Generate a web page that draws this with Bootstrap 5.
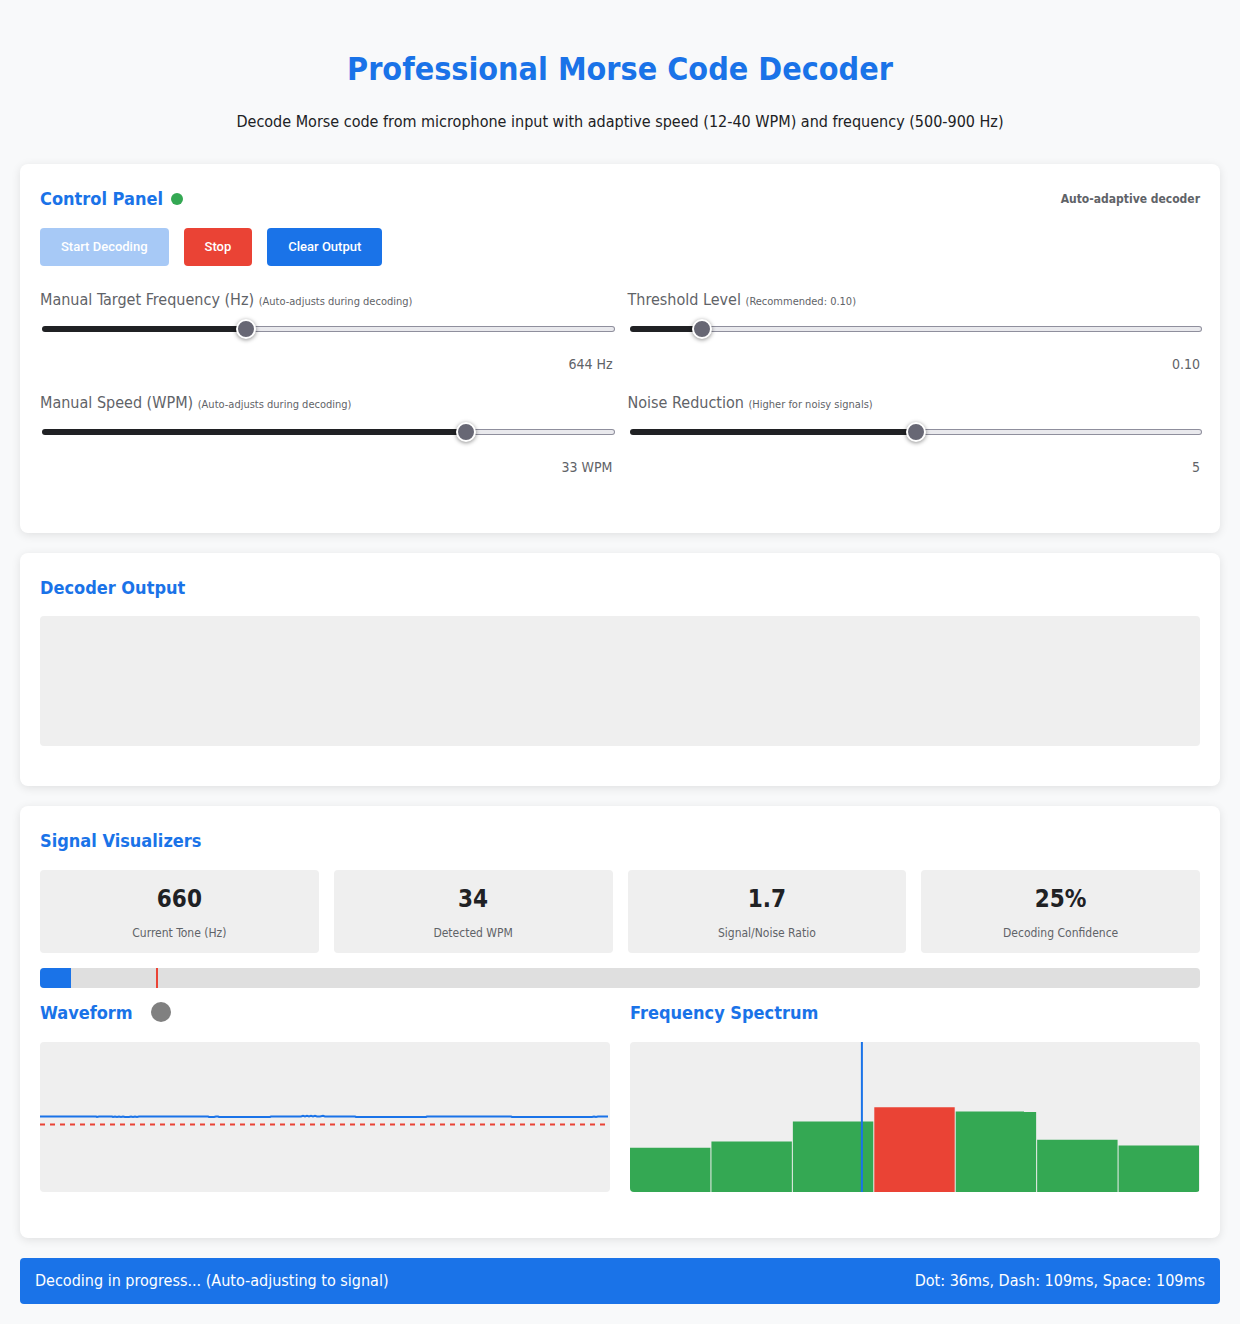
<!DOCTYPE html>
<html lang="en">
<head>
<meta charset="utf-8">
<meta name="viewport" content="width=device-width, initial-scale=1">
<title>Professional Morse Code Decoder</title>
<link href="https://cdn.jsdelivr.net/npm/bootstrap@5.3.0/dist/css/bootstrap.min.css" rel="stylesheet">
<style>
:root { --brand: #1a73e8; --stop: #ea4335; --ok: #34a853; --ink: #202124; --soft: #5f6368; --tile: #efefef; }
body { font-family: "DejaVu Sans Condensed", "DejaVu Sans", sans-serif; font-size: 16px; line-height: 26px; color: var(--ink); background: #f8f9fa; padding: 20px; }
h1, h2 { color: var(--brand); font-weight: 700; }
h1 { font-size: 32px; line-height: 52px; margin: 0 0 14px; }
h2 { font-size: 18px; line-height: 30px; margin: 0 0 14px; }
.intro { padding: 23px 0 29px; }
.panel { background: #fff; border-radius: 8px; box-shadow: 0 2px 10px rgba(0,0,0,.1); padding: 20px; margin-bottom: 20px; }
.gap-15 { gap: 15px; }
.gap-20 { gap: 20px; }
.dot { width: 12px; height: 12px; background: var(--ok); }
.tagline { font-size: 12px; line-height: 30px; font-weight: 700; color: var(--soft); }
.btn { font: 500 13px/18px Roboto, sans-serif; padding: 10px 21px; border: 0; border-radius: 4px; color: #fff; }
.btn:disabled { color: #fff; background: var(--brand); opacity: .38; }
.btn-run, .btn-run:hover { background: var(--brand); color: #fff; }
.btn-halt, .btn-halt:hover { background: var(--stop); color: #fff; }
.settings { display: grid; grid-template-columns: 1fr 1fr; gap: 15px; padding: 21px 0 35px; }
.settings label, .settings output { color: var(--soft); display: block; }
.settings label span { font-size: 11px; }
.settings output { font-size: 14px; line-height: 22px; text-align: right; }
.slider { -webkit-appearance: none; appearance: none; display: block; width: 100%; height: 20px; margin: 4px 0 14px 2px; background: transparent; }
.slider::-webkit-slider-runnable-track { height: 6px; border-radius: 3px; border: 1px solid transparent;
  background: linear-gradient(var(--ink), var(--ink)) 0 0 / var(--at) 100% no-repeat border-box, linear-gradient(#e9e9ed, #e9e9ed) padding-box, linear-gradient(#8f8f9d, #8f8f9d) border-box; }
.slider::-webkit-slider-thumb { -webkit-appearance: none; width: 20px; height: 20px; margin-top: -8px; border-radius: 50%; border: 2px solid #fff; background: #676774; box-shadow: 0 1px 4px rgba(0,0,0,.45); }
.output-title { margin-bottom: 13px; }
.readout { background: var(--tile); border-radius: 4px; height: 130px; margin-bottom: 20px; }
.stat { flex: 1 1 0; background: var(--tile); border-radius: 4px; text-align: center; padding: 10px; }
.stat strong { display: block; font-size: 24px; line-height: 39px; margin-bottom: 5px; }
.stat span { display: block; font-size: 12px; line-height: 19px; color: var(--soft); }
.meter { height: 20px; border-radius: 4px; background: #dfdfdf; overflow: hidden; position: relative; margin: 15px 0 10px; }
.meter-fill { height: 100%; background: var(--brand); }
.meter-mark { position: absolute; top: 0; width: 2px; height: 100%; background: var(--stop); }
.plots { padding-bottom: 26px; }
.plots > div { flex: 1 1 0; min-width: 0; }
.lamp { width: 20px; height: 20px; background: #808080; margin-left: 18px; }
.plot { display: block; width: 100%; height: 150px; border-radius: 4px; background: var(--tile); }
.status { background: var(--brand); color: #fff; border-radius: 4px; padding: 10px 15px; }
</style>
<script src="https://cdn.jsdelivr.net/npm/bootstrap@5.3.0/dist/js/bootstrap.bundle.min.js"></script>
</head>
<body>
<header class="text-center intro">
  <h1>Professional Morse Code Decoder</h1>
  <p class="m-0">Decode Morse code from microphone input with adaptive speed (12-40 WPM) and frequency (500-900 Hz)</p>
</header>
<main>
  <section class="panel">
    <div class="d-flex justify-content-between">
      <h2 class="d-flex align-items-center gap-2">Control Panel <span class="dot rounded-circle"></span></h2>
      <span class="tagline">Auto-adaptive decoder</span>
    </div>
    <div class="d-flex flex-wrap gap-15">
      <button class="btn btn-run" type="button" disabled>Start Decoding</button>
      <button class="btn btn-halt" type="button">Stop</button>
      <button class="btn btn-run" type="button">Clear Output</button>
    </div>
    <div class="settings">
      <div>
        <label for="freq">Manual Target Frequency (Hz) <span>(Auto-adjusts during decoding)</span></label>
        <input class="slider" id="freq" type="range" min="500" max="900" step="10" value="640" style="--at: 35%">
        <output for="freq">644 Hz</output>
      </div>
      <div>
        <label for="threshold">Threshold Level <span>(Recommended: 0.10)</span></label>
        <input class="slider" id="threshold" type="range" min="0.05" max="0.5" step="0.01" value="0.1" style="--at: 11%">
        <output for="threshold">0.10</output>
      </div>
      <div>
        <label for="speed">Manual Speed (WPM) <span>(Auto-adjusts during decoding)</span></label>
        <input class="slider" id="speed" type="range" min="12" max="40" value="33" style="--at: 75%">
        <output for="speed">33 WPM</output>
      </div>
      <div>
        <label for="noise">Noise Reduction <span>(Higher for noisy signals)</span></label>
        <input class="slider" id="noise" type="range" min="0" max="10" value="5" style="--at: 50%">
        <output for="noise">5</output>
      </div>
    </div>
  </section>

  <section class="panel">
    <h2 class="output-title">Decoder Output</h2>
    <div class="readout"></div>
  </section>

  <section class="panel">
    <h2>Signal Visualizers</h2>
    <div class="d-flex gap-15">
      <div class="stat"><strong>660</strong><span>Current Tone (Hz)</span></div>
      <div class="stat"><strong>34</strong><span>Detected WPM</span></div>
      <div class="stat"><strong>1.7</strong><span>Signal/Noise Ratio</span></div>
      <div class="stat"><strong>25%</strong><span>Decoding Confidence</span></div>
    </div>
    <div class="meter">
      <div class="meter-fill" style="width: 2.7%"></div>
      <div class="meter-mark" style="left: 10%"></div>
    </div>
    <div class="d-flex gap-20 plots">
      <div>
        <h2 class="d-flex">Waveform <span class="lamp rounded-circle mt-1"></span></h2>
        <svg class="plot" viewBox="0 0 570 150" preserveAspectRatio="none" aria-hidden="true">
          <path fill="none" stroke="#1a73e8" stroke-width="2" d="M0 74.500H56L57 75L59 74.500H72L73 75L75 74.500L77 75L79 74.500L81 75L83 74.500L85 75H89L91 74.500L93 75L95 74.500L97 75L99 74.500H168L169 75H174L176 74.500H178L179 75H230L231 74.500H261L263 73.800L265 74.500L267 73.800L269 74.500L271 73.800L273 74.500L275 73.800L277 74.500H280L283 73.800L285 74.500H315L316 75H386L387 74.500H471L472 75H552L554 74.500L556 75L558 74.500H568"/>
          <path stroke="#ea4335" stroke-width="2" stroke-dasharray="5 5" d="M0 82.500H570"/>
        </svg>
      </div>
      <div>
        <h2>Frequency Spectrum</h2>
        <svg class="plot" viewBox="0 0 570 150" preserveAspectRatio="none" aria-hidden="true">
          <g fill="#34a853">
            <path d="M0 105.800H80.430V150H0Z"/>
            <path d="M81.430 99.400H161.860V150H81.430Z"/>
            <path d="M162.860 79.400H243.290V150H162.860Z"/>
            <path fill="#ea4335" d="M244.290 65.300H324.710V150H244.290Z"/>
            <path d="M325.710 69.400H394V70H406.140V150H325.710Z"/>
            <path d="M407.140 97.700H487.570V150H407.140Z"/>
            <path d="M488.570 103.500H569V150H488.570Z"/>
          </g>
          <path stroke="#1a73e8" stroke-width="2" d="M231.900 0V150"/>
        </svg>
      </div>
    </div>
  </section>
</main>
<footer class="status d-flex justify-content-between">
  <span>Decoding in progress... (Auto-adjusting to signal)</span>
  <span>Dot: 36ms, Dash: 109ms, Space: 109ms</span>
</footer>
</body>
</html>
